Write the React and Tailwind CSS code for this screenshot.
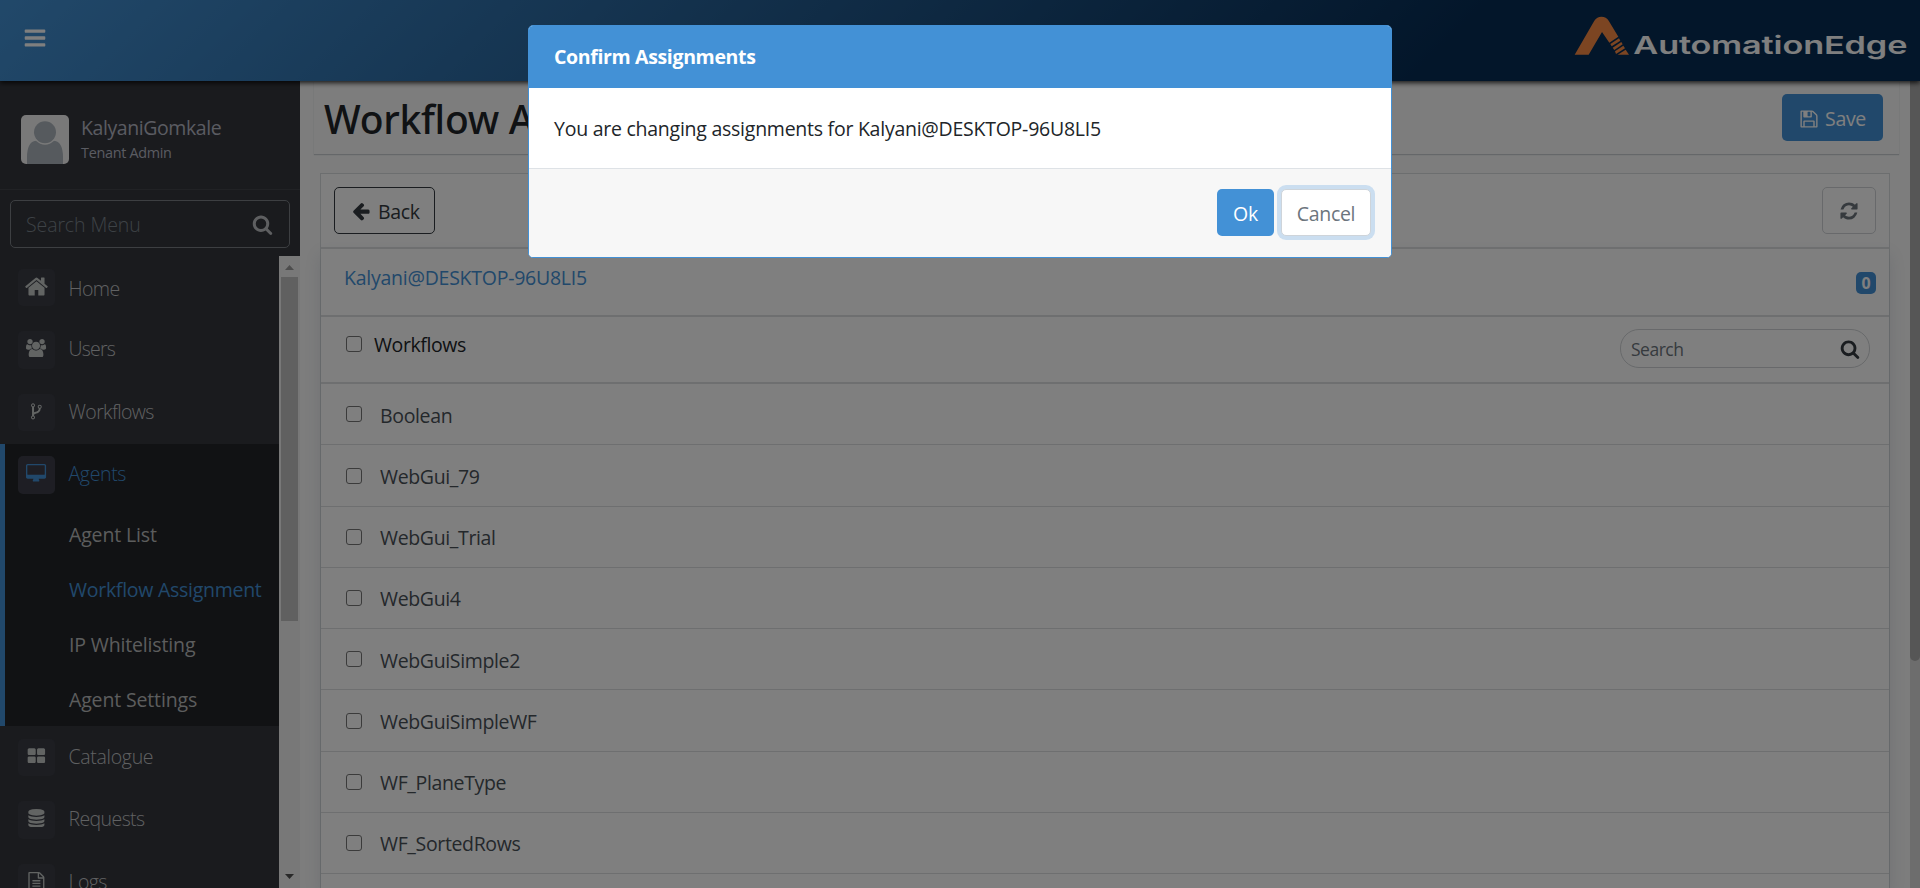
const ICONS = {
  bars: 'M1664 1344v128q0 26-19 45t-45 19H192q-26 0-45-19t-19-45v-128q0-26 19-45t45-19h1408q26 0 45 19t19 45zm0-512v128q0 26-19 45t-45 19H192q-26 0-45-19t-19-45V832q0-26 19-45t45-19h1408q26 0 45 19t19 45zm0-512v128q0 26-19 45t-45 19H192q-26 0-45-19t-19-45V320q0-26 19-45t45-19h1408q26 0 45 19t19 45z',
  search: 'M1216 832q0-185-131.5-316.5T768 384 451.5 515.5 320 832t131.5 316.5T768 1280t316.5-131.5T1216 832zm512 832q0 52-38 90t-90 38q-54 0-90-38l-343-342q-179 124-399 124-143 0-273.5-55.5t-225-150-150-225T64 832t55.5-273.5 150-225 225-150T768 128t273.5 55.5 225 150 150 225T1472 832q0 220-124 399l343 343q37 37 37 90z',
  home: 'M1472 992v480q0 26-19 45t-45 19h-384v-384H768v384H384q-26 0-45-19t-19-45V992q0-1 .5-3t.5-3l575-474 575 474q1 2 1 6zm223-69l-62 74q-8 9-21 11h-3q-13 0-21-7L896 424l-692 577q-12 8-24 7-13-2-21-11l-62-74q-8-10-7-23.5T101 878l719-599q32-26 76-26t76 26l244 204V288q0-14 9-23t23-9h192q14 0 23 9t9 23v408l219 182q10 8 11 21.5t-7 23.5z',
  users: 'M593 896q-162 5-265 128H194q-82 0-138-40.5T0 865q0-353 124-353 6 0 43.5 21t97.5 42.5T384 597q67 0 133-23-5 37-5 66 0 139 81 256zm1071 637q0 120-73 189.5t-194 69.5H523q-121 0-194-69.5T256 1533q0-53 3.5-103.5t14-109T300 1212t43-97.5 62-81 85.5-53.5T602 960q10 0 43 21.5t73 48 107 48 135 21.5 135-21.5 107-48 73-48 43-21.5q61 0 111.5 20t85.5 53.5 62 81 43 97.5 26.5 108.5 14 109 3.5 103.5zM640 256q0 106-75 181t-181 75-181-75-75-181 75-181T384 0t181 75 75 181zm704 384q0 159-112.5 271.5T960 1024 688.5 911.5 576 640t112.5-271.5T960 256t271.5 112.5T1344 640zm576 225q0 78-56 118.5t-138 40.5h-134q-103-123-265-128 81-117 81-256 0-29-5-66 66 23 133 23 59 0 119-21.5t97.5-42.5 43.5-21q124 0 124 353zm-128-609q0 106-75 181t-181 75-181-75-75-181 75-181 181-75 181 75 75 181z',
  fork: 'M672 1472q0-40-28-68t-68-28-68 28-28 68 28 68 68 28 68-28 28-68zm0-1152q0-40-28-68t-68-28-68 28-28 68 28 68 68 28 68-28 28-68zm640 128q0-40-28-68t-68-28-68 28-28 68 28 68 68 28 68-28 28-68zm96 0q0 52-26 96.5t-70 69.5q-2 287-226 414-67 38-203 81-128 40-169.5 71t-41.5 100v26q44 25 70 69.5t26 96.5q0 80-56 136t-136 56-136-56-56-136q0-52 26-96.5t70-69.5V486q-44-25-70-69.5T384 320q0-80 56-136t136-56 136 56 56 136q0 52-26 96.5T672 486v497q54-26 154-57 55-17 87.5-29.5t70.5-31 59-39.5 40.5-51 28-69.5T1120 614q-44-25-70-69.5t-26-96.5q0-80 56-136t136-56 136 56 56 136z',
  desktop: 'M1728 992V160q0-13-9.5-22.5T1696 128H96q-13 0-22.5 9.5T64 160v832q0 13 9.5 22.5t22.5 9.5h1600q13 0 22.5-9.5t9.5-22.5zm128-832v1088q0 66-47 113t-113 47h-544q0 37 16 77.5t32 71 16 43.5q0 26-19 45t-45 19H640q-26 0-45-19t-19-45q0-14 16-44t32-70 16-78H96q-66 0-113-47t-47-113V160q0-66 47-113T96 0h1600q66 0 113 47t47 113z',
  large: 'M832 1024v384q0 52-38 90t-90 38H192q-52 0-90-38t-38-90v-384q0-52 38-90t90-38h512q52 0 90 38t38 90zm0-768v384q0 52-38 90t-90 38H192q-52 0-90-38t-38-90V256q0-52 38-90t90-38h512q52 0 90 38t38 90zm896 768v384q0 52-38 90t-90 38h-512q-52 0-90-38t-38-90v-384q0-52 38-90t90-38h512q52 0 90 38t38 90zm0-768v384q0 52-38 90t-90 38h-512q-52 0-90-38t-38-90V256q0-52 38-90t90-38h512q52 0 90 38t38 90z',
  database: 'M896 768q237 0 443-43t325-127v170q0 69-103 128t-280 93.5-385 34.5-385-34.5T231 896 128 768V598q119 84 325 127t443 43zm0 768q237 0 443-43t325-127v170q0 69-103 128t-280 93.5-385 34.5-385-34.5-280-93.5-103-128v-170q119 84 325 127t443 43zm0-384q237 0 443-43t325-127v170q0 69-103 128t-280 93.5-385 34.5-385-34.5-280-93.5-103-128V982q119 84 325 127t443 43zM896 0q208 0 385 34.5t280 93.5 103 128v128q0 69-103 128t-280 93.5T896 640t-385-34.5T231 512 128 384V256q0-69 103-128t280-93.5T896 0z',
  file: 'M1596 380q28 28 48 76t20 88v1152q0 40-28 68t-68 28H224q-40 0-68-28t-28-68V96q0-40 28-68t68-28h896q40 0 88 20t76 48zm-444-244v376h376q-10-29-22-41l-313-313q-12-12-41-22zm384 1528V640h-416q-40 0-68-28t-28-68V128H256v1536h1280zM512 800q0-14 9-23t23-9h704q14 0 23 9t9 23v64q0 14-9 23t-23 9H544q-14 0-23-9t-9-23v-64zm736 224q14 0 23 9t9 23v64q0 14-9 23t-23 9H544q-14 0-23-9t-9-23v-64q0-14 9-23t23-9h704zm0 256q14 0 23 9t9 23v64q0 14-9 23t-23 9H544q-14 0-23-9t-9-23v-64q0-14 9-23t23-9h704z',
  refresh: 'M1639 1056q0 5-1 7-64 268-268 434.5T892 1664q-146 0-282.5-55T366 1452l-129 129q-19 19-45 19t-45-19-19-45v-448q0-26 19-45t45-19h448q26 0 45 19t19 45-19 45l-137 137q71 66 161 102t187 36q134 0 250-65t186-179q11-17 53-117 8-23 30-23h192q13 0 22.5 9.5t9.5 22.5zm25-800v448q0 26-19 45t-45 19h-448q-26 0-45-19t-19-45 19-45l138-138Q1097 384 896 384q-134 0-250 65T460 628q-11 17-53 117-8 23-30 23H178q-13 0-22.5-9.5T146 736v-7q65-268 270-434.5T896 128q146 0 284 55.5T1425 340l130-129q19-19 45-19t45 19 19 45z',
  back: 'M1664 896v128q0 53-32.5 90.5T1547 1152H843l293 294q38 36 38 90t-38 90l-75 76q-37 37-90 37-52 0-91-37L229 1050q-37-37-37-90 0-52 37-91l651-650q38-38 91-38 52 0 90 38l75 74q38 38 38 91t-38 91L843 768h704q52 0 84.5 37.5T1664 896z',
  save: 'M512 1536h768v-384H512v384zm896 0h128V640q0-14-10-38.5t-20-34.5l-281-281q-10-10-34-20t-39-10v416q0 40-28 68t-68 28H480q-40 0-68-28t-28-68V256H256v1280h128v-416q0-40 28-68t68-28h832q40 0 68 28t28 68v416zM1024 608V288q0-13-9.5-22.5T992 256H800q-13 0-22.5 9.5T768 288v320q0 13 9.5 22.5t22.5 9.5h192q13 0 22.5-9.5t9.5-22.5zm640 32v928q0 40-28 68t-68 28H224q-40 0-68-28t-28-68V224q0-40 28-68t68-28h928q40 0 88 20t76 48l280 280q28 28 48 76t20 88z',
};

const VIEWBOXES = { users: '0 0 1920 1792', desktop: '-64 0 1920 1792' };

function Icon({ name, className }) {
  return (
    <svg viewBox={VIEWBOXES[name] || '0 0 1792 1792'} className={`shrink-0 fill-current ${className}`}>
      <path d={ICONS[name]} />
    </svg>
  );
}

function Logo() {
  return (
    <svg viewBox="40 40 1010 145" className="h-[48.33px] w-[336.67px]">
      <g fill="#f88a44">
        <path d="M45 162 L104 60 Q112 48 125 48 Q140 48 147 60 L176 108 L149 126 L127 94 L87 162Z" />
        <path d="M152 130 L178 113 L182 120 L156 137Z" />
        <path d="M159 141 L185 124 L189 131 L164 148Z" />
        <path d="M166 152 L191 135 L196 143 L169 160Z" />
        <path d="M174 162 L198 147 L208 162Z" />
      </g>
      <text x="221" y="161" textLength="822" lengthAdjust="spacingAndGlyphs" fill="#fff" fontFamily="Inter, sans-serif" fontWeight="600" fontSize="73">
        AutomationEdge
      </text>
    </svg>
  );
}

function MenuItem({ icon, label, active, iconClass = 'mt-2 h-[18.75px]', textClass = '-translate-y-[1.5px]', tracking = 'tracking-[-0.6px]' }) {
  return (
    <div className="flex h-[62.5px] shrink-0 items-center">
      <div className={`flex h-[37.5px] w-[37px] items-start justify-center rounded-[5px] ${active ? 'bg-[#3c3d48] text-[#4391d6]' : 'bg-[#3a3c45] text-[#c4c8c6]'}`}>
        <Icon name={icon} className={iconClass} />
      </div>
      <span className={`ml-[13.5px] font-light ${tracking} ${textClass} ${active ? 'text-[#4391d6]' : 'text-[#c0c2c5]'}`}>{label}</span>
    </div>
  );
}

function Sidebar() {
  const sub = ['Agent List', 'Workflow Assignment', 'IP Whitelisting', 'Agent Settings'];
  return (
    <aside className="flex w-[300px] shrink-0 flex-col bg-[#34363c]">
      <div className="flex h-[109px] shrink-0 items-center border-b border-[#42444b] pl-[21px] pt-[8px]">
        <svg viewBox="63 345 144 147" className="h-[49px] w-12 rounded-[5px]">
          <rect x="63" y="345" width="144" height="147" fill="#f3f3f3" />
          <path d="M81 492v-20q0-50 30-50 24 14 48 0 30 0 30 50v20z" fill="#acb4bc" />
          <circle cx="135" cy="397" r="37" fill="#f3f3f3" />
          <circle cx="135" cy="397" r="33" fill="#acb4bc" />
        </svg>
        <div className="ml-3 flex flex-col text-[#b4b8c4]">
          <span className="leading-[27px] tracking-[-0.42px]">KalyaniGomkale</span>
          <span className="text-[14.4px] leading-[24px] tracking-[-0.3px]">Tenant Admin</span>
        </div>
      </div>
      <div className="mx-2.5 mt-2.5 flex h-12 shrink-0 items-center justify-between rounded-[5px] border border-[#7a7f85] pl-[15px] pr-4">
        <span className="translate-y-px font-light tracking-[-0.1px] text-[#7b848c]">Search Menu</span>
        <Icon name="search" className="h-[21px] text-[#bdbfc2]" />
      </div>
      <div className="mt-2 flex min-h-0 flex-1">
        <nav className="flex w-[279px] flex-col overflow-hidden">
          <div className="flex flex-col pl-[18px]">
            <MenuItem icon="home" label="Home" iconClass="mt-[5.5px] h-[25px]" textClass="translate-y-px" />
            <MenuItem icon="users" label="Users" iconClass="mt-[7.5px] h-[18.75px]" tracking="tracking-[-0.8px]" />
            <MenuItem icon="fork" label="Workflows" />
          </div>
          <div className="flex flex-col border-l-[5px] border-[#4391d6] bg-[#222428] pl-[13px]">
            <MenuItem icon="desktop" label="Agents" active tracking="tracking-[-0.35px]" />
            {sub.map((s) => (
              <div key={s} className={`flex h-[55px] shrink-0 items-center pl-[51px] ${s === 'Workflow Assignment' ? 'text-[#4391d6]' : 'tracking-[-0.15px] text-[#b9babb]'}`}>
                <span className="translate-y-px">{s}</span>
              </div>
            ))}
          </div>
          <div className="flex flex-col pl-[18px]">
            <MenuItem icon="large" label="Catalogue" tracking="tracking-[-0.3px]" />
            <MenuItem icon="database" label="Requests" iconClass="mt-[7.5px] h-[18.75px]" />
            <MenuItem icon="file" label="Logs" />
          </div>
        </nav>
        <div className="flex w-[21px] flex-col items-center bg-[#f1f1f1]">
          <svg viewBox="0 0 21 21" className="h-[21px] shrink-0">
            <path d="M6 14h9l-4.5-5z" fill="#9a9a9a" />
          </svg>
          <div className="h-[344px] w-[17px] shrink-0 bg-[#c1c1c1]" />
          <svg viewBox="0 0 21 21" className="mt-auto h-[21px] shrink-0">
            <path d="M6 7h9l-4.5 5z" fill="#505050" />
          </svg>
        </div>
      </div>
    </aside>
  );
}

function Checkbox() {
  return <span className="size-4 shrink-0 rounded-[3px] border border-[#767676]" />;
}

const WORKFLOWS = ['Boolean', 'WebGui_79', 'WebGui_Trial', 'WebGui4', 'WebGuiSimple2', 'WebGuiSimpleWF', 'WF_PlaneType', 'WF_SortedRows'];

function Main() {
  return (
    <main className="flex min-w-0 flex-1 flex-col overflow-hidden bg-[#fafafa]">
      <div className="ml-3.5 mr-[11px] flex h-[73px] shrink-0 items-center justify-between bg-[#fbfbfb] pl-[10px] pr-4 shadow-[0_1px_1px_rgba(60,80,90,0.25)]">
        <h1 className="translate-y-px font-['Noto_Sans',sans-serif] text-[39px] font-medium leading-none text-[#212529]">Workflow Assignment</h1>
        <button className="flex h-[47px] w-[101px] items-center rounded-[5px] bg-[#4391d6] pl-[17px] text-white">
          <Icon name="save" className="mt-0.5 h-5" />
          <span className="ml-1.5 translate-y-px tracking-[-0.3px]">Save</span>
        </button>
      </div>
      <section className="ml-5 mr-5 mt-[19px] flex flex-1 flex-col border border-b-0 border-[#d9dddf] bg-white">
        <div className="flex h-[73px] shrink-0 items-center justify-between px-[13px]">
          <button className="flex h-[47px] w-[101px] items-center rounded-[5px] border border-[#343a40] pl-4 text-[#343a40]">
            <Icon name="back" className="h-5" />
            <span className="ml-[7px] translate-y-px tracking-[-0.3px]">Back</span>
          </button>
          <button className="flex h-[47px] w-[54px] items-center justify-center rounded-[5px] border border-[#d0d3d6] text-[#6c757d]">
            <Icon name="refresh" className="h-5" />
          </button>
        </div>
        <div className="flex flex-1 flex-col shadow-[0_8px_16px_rgba(50,80,110,0.14)]">
          <div className="flex h-[68px] shrink-0 items-start justify-between border-t-2 border-[#dcdee0] pl-[23px] pr-[13px]">
            <span className="mt-[14px] tracking-[-0.25px] text-[#4391d6]">Kalyani@DESKTOP-96U8LI5</span>
            <span className="mt-[23px] flex h-[22px] w-5 items-center justify-center rounded-[5px] bg-[#4391d6] text-[16px] font-bold text-white">0</span>
          </div>
          <div className="flex h-[69.15px] shrink-0 items-start justify-between border-y-2 border-[#dcdee0] pl-[25px] pr-[19px]">
            <div className="mt-3 flex items-center">
              <Checkbox />
              <span className="ml-3 translate-y-px tracking-[-0.4px] text-[#212529]">Workflows</span>
            </div>
            <div className="mt-3 flex h-[39px] w-[250px] items-center justify-between rounded-[19px] border border-[#d0d3d6] pl-2.5 pr-[9px] text-[17.5px] text-[#6c757d]">
              <span className="translate-y-px tracking-[-0.5px]">Search</span>
              <Icon name="search" className="h-5 text-[#343a40]" />
            </div>
          </div>
          {WORKFLOWS.map((w) => (
            <div key={w} className="flex h-[61.25px] shrink-0 items-center border-b border-[#dcdee0] pl-[25px]">
              <Checkbox />
              <span className="ml-[18px] translate-y-[0.5px] tracking-[-0.35px] text-[#495057]">{w}</span>
            </div>
          ))}
        </div>
      </section>
    </main>
  );
}

function ConfirmDialog() {
  return (
    <div className="flex h-[232.5px] w-[864px] flex-col overflow-hidden rounded-[5px] border border-[#4391d6] bg-white">
      <div className="flex h-[62px] shrink-0 items-center bg-[#4391d6] pl-[25px]">
        <h2 className="font-bold tracking-[-0.35px] text-white">Confirm Assignments</h2>
      </div>
      <div className="flex flex-1 items-center pl-[25px] text-[#212529]">
        <p className="translate-y-px tracking-[-0.25px]">You are changing assignments for Kalyani@DESKTOP-96U8LI5</p>
      </div>
      <div className="flex h-[89px] shrink-0 items-center justify-end gap-[7px] border-t border-[#dee2e6] bg-[#f7f7f7] pr-5">
        <button className="h-[47px] w-[57px] rounded-[5px] bg-[#4391d6] pt-0.5 tracking-[-0.3px] text-white">Ok</button>
        <button className="h-[47px] w-[90px] rounded-[5px] border border-[#ced4da] bg-white pt-0.5 tracking-[-0.3px] text-[#6c757d] ring-4 ring-[#cbdef0]">Cancel</button>
      </div>
    </div>
  );
}

export default function App() {
  return (
    <div className="relative h-[888px] w-[1920px] overflow-hidden font-['Open_Sans',sans-serif] text-[19.5px] tracking-[-0.27px]">
      <div className="flex h-full flex-col">
        <header className="relative z-10 flex h-[81px] shrink-0 items-start justify-between bg-[linear-gradient(135deg,#4391d4_0%,#062c54_75%)] pl-[22.8px] pr-[10px] shadow-[0_2px_5px_rgba(0,0,0,0.8)]">
          <Icon name="bars" className="mt-[25.6px] h-6 text-white" />
          <div className="mt-[13.8px]">
            <Logo />
          </div>
        </header>
        <div className="flex min-h-0 flex-1">
          <Sidebar />
          <Main />
          <div className="w-2.5 shrink-0 bg-[#dadada]">
            <div className="h-[580px] rounded-b-[5px] bg-[#acacac]" />
          </div>
        </div>
      </div>
      <div className="absolute inset-0 z-20 flex items-start justify-center bg-black/50 pt-[25px]">
        <ConfirmDialog />
      </div>
    </div>
  );
}
